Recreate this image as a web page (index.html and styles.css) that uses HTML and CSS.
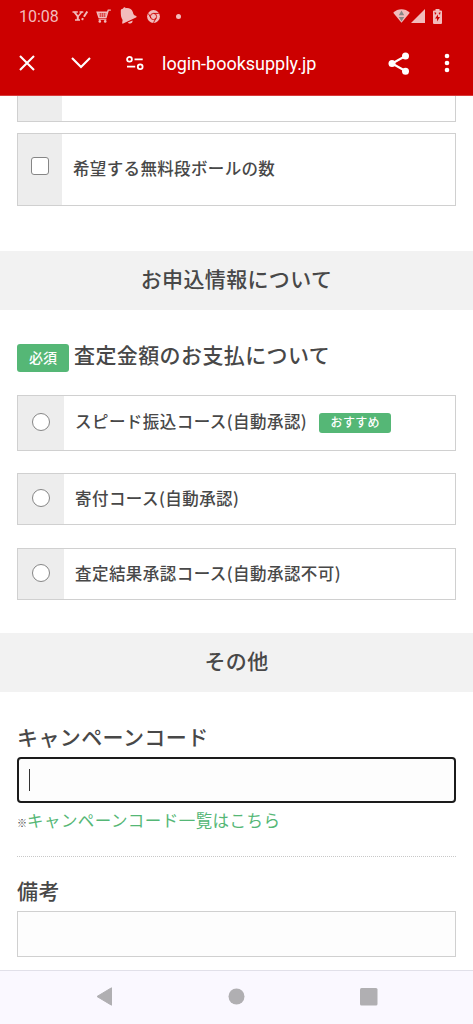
FILE: index.html
```html
<!DOCTYPE html>
<html lang="ja">
<head>
<meta charset="utf-8">
<title>お申込情報</title>
<link rel="stylesheet" href="styles.css">
</head>
<body>
<div class="screen">
  <header class="top">
    <div class="status">
      <span class="clock">10:08</span>
      <svg class="st-yahoo" width="18" height="14" viewBox="0 0 18 14" fill="none" stroke="currentColor"><path d="M.5 3h5.300M7.500 3h3.800M3 11h5" stroke-width="1.300"/><path d="M2.300 3l3.500 4.500V11" stroke-width="2"/><path d="M9.800 3L6 7.500" stroke-width="1.300"/><path d="M15.300 2.500l-3.400 5.300" stroke-width="2"/><path d="M10.900 9.200l-.8 1.800" stroke-width="2"/></svg>
      <svg class="st-cart" width="15" height="14" viewBox="0 0 15 14"><path fill="currentColor" d="M.2 2.600h10.800l.8-2.200h3v1.300h-2L10.600 9H2.400z"/><path fill="none" stroke="currentColor" stroke-width="1.200" d="M2.600 10.200h7.800"/><circle cx="3.800" cy="12.400" r="1.300" fill="currentColor"/><circle cx="9.200" cy="12.400" r="1.300" fill="currentColor"/><path class="cut thin" d="M2.500 4.900h8M3 7h7M4.600 4v4M6.500 4v4M8.400 4v4"/></svg>
      <svg class="st-bell" width="17" height="18" viewBox="0 0 17 18" fill="currentColor"><path d="M.8 4.200C.6 2.400 1.800 1.600 3 1.800 3.400-.2 5.200-.2 5.800 1.200c3.200-.5 6.200 1.300 7 3.800.5 1.700.6 2.400 1.600 3.200l1.800.9c.6.4.4 1.200-.2 1.500L3.200 16.600c-.7.200-1.200-.2-1-.9l.4-2.800C.9 10.500.8 8 .8 4.200z"/><path d="M7.800 15.400l4.800-1.900c.2 3-3 4.100-4.800 1.900z"/></svg>
      <svg class="st-chrome" width="13" height="13" viewBox="0 0 13 13"><circle cx="6.500" cy="6.500" r="6.400" fill="currentColor"/><circle class="cut" cx="6.500" cy="6.500" r="3.100"/><path class="cut" d="M6.500 3.400h5.300M3.900 8L1.300 3.500M9.100 8l-2.600 4.700"/></svg>
      <span class="dot"></span>
      <svg class="st-wifi" width="17" height="14" viewBox="0 0 17 14"><path fill="currentColor" d="M8.500 13.800L.2 3.800C5-.8 12-.8 16.800 3.800z"/><path fill="#888" d="M8.500 1.600l2.700 4.600H5.800zM5.800 8h5.400l-2.700 4.600z"/></svg>
      <svg class="st-signal" width="14" height="14" viewBox="0 0 14 14"><path fill="currentColor" d="M14 0v14H0z"/></svg>
      <svg class="st-battery" width="9" height="15" viewBox="0 0 9 15"><path fill="currentColor" d="M2.500 0h4v1.500H8q1 0 1 1V14q0 1-1 1H1q-1 0-1-1V2.500q0-1 1-1h1.500z"/><path fill="#c00" d="M5 5.500v2.500h2L4 12.500V9.500H2zM1.500 3l2 1-1.500 2zM7.500 3l-2 1L7 6z"/></svg>
    </div>
    <div class="toolbar">
      <svg class="tb-close" width="16" height="16" viewBox="0 0 16 16"><path d="M1 1l14 14M15 1L1 15"/></svg>
      <svg class="tb-down" width="20" height="12" viewBox="0 0 20 12"><path d="M1 1l9 9 9-9"/></svg>
      <svg class="tb-site" width="18" height="14" viewBox="0 0 18 14"><circle cx="3.500" cy="3.300" r="2.400"/><path d="M8.500 3.300h8.200M1 10.700h8.200"/><circle cx="14.200" cy="10.700" r="2.400"/></svg>
      <span class="url">login-booksupply.jp</span>
      <svg class="tb-share" width="22" height="23" viewBox="0 0 22 23"><path d="M17.500 4L4 11.500l13.500 7.500"/><g class="solid"><circle cx="17.500" cy="4" r="3.500"/><circle cx="4" cy="11.500" r="3.500"/><circle cx="17.500" cy="19.200" r="3.500"/></g></svg>
      <svg class="tb-more" width="6" height="20" viewBox="0 0 6 20"><g class="solid"><circle cx="3" cy="3" r="2.300"/><circle cx="3" cy="10" r="2.300"/><circle cx="3" cy="17" r="2.300"/></g></svg>
    </div>
  </header>

  <main class="content">
    <div class="choice choice-cut"><span class="cell"></span></div>
    <label class="choice choice-box"><span class="cell"><span class="check"></span></span><span class="label">希望する無料段ボールの数</span></label>

    <h2 class="section">お申込情報について</h2>

    <div class="question"><span class="required">必須</span><h3 class="title">査定金額のお支払について</h3></div>
    <label class="choice course course-first"><span class="cell"><span class="radio"></span></span><span class="label">スピード振込コース(自動承認)</span><span class="tag">おすすめ</span></label>
    <label class="choice course"><span class="cell"><span class="radio"></span></span><span class="label">寄付コース(自動承認)</span></label>
    <label class="choice course course-last"><span class="cell"><span class="radio"></span></span><span class="label">査定結果承認コース(自動承認不可)</span></label>

    <h2 class="section section-other">その他</h2>

    <h3 class="title title-field">キャンペーンコード</h3>
    <div class="field focused"><span class="caret"></span></div>
    <p class="note"><span class="mark">※</span><a class="link">キャンペーンコード一覧はこちら</a></p>
    <div class="rule"></div>
    <h3 class="title title-remarks">備考</h3>
    <div class="field"></div>
  </main>

  <nav class="navbar">
    <svg width="17" height="19" viewBox="0 0 17 19"><path d="M15.500.8v17.400L1 9.500z" stroke="#b0afb2" stroke-linejoin="round"/></svg>
    <svg width="17" height="17" viewBox="0 0 17 17"><circle cx="8.500" cy="8.500" r="8"/></svg>
    <svg width="18" height="18" viewBox="0 0 18 18"><rect width="17.500" height="17.500" rx="1.500"/></svg>
  </nav>
</div>
</body>
</html>
```
FILE: styles.css
```css
* { box-sizing: border-box; }
body {
  margin: 0;
  background: #fff;
  color: #484848;
  font-family: "Noto Sans CJK JP", sans-serif;
}
svg { display: block; flex: none; }
h2, h3, p { margin: 0; font-weight: 500; }
.screen { width: 473px; height: 1024px; display: flex; flex-direction: column; overflow: hidden; }

.top { flex: none; height: 96px; background: #c00; font-family: Roboto, sans-serif; border-bottom: 1px solid #d83a3a; }
.status { height: 32px; display: flex; align-items: center; color: #f2bcbc; }
.clock { width: 53px; margin-left: 19px; padding-top: 1px; font-size: 16px; letter-spacing: 0; line-height: 32px; }
.st-yahoo { margin-right: -1px; }
.st-cart { margin-left: 7px; }
.st-bell { margin-left: 9px; }
.st-chrome { margin-left: 10px; }
.dot { width: 5px; height: 5px; margin-left: 16px; border-radius: 50%; background: currentColor; }
.st-wifi { margin-left: auto; }
.st-signal { margin-left: 1px; }
.st-battery { margin: 0 31px 0 8px; }
.cut { fill: none; stroke: #c00; stroke-width: 0.9; }
.thin { stroke-width: 0.5; }

.toolbar { height: 62px; display: flex; align-items: center; color: #fff; }
.toolbar svg { fill: none; stroke: #fff; stroke-width: 2.1; }
.toolbar .solid { fill: #fff; stroke: none; }
.tb-close { margin-left: 19px; }
.tb-down { margin-left: 36px; }
.toolbar .tb-site { margin-left: 35px; stroke-width: 1.8; }
.url { margin-left: 18px; padding-top: 1px; font-size: 18px; line-height: 24px; }
.tb-share { margin-left: auto; }
.tb-more { margin: 0 23px 0 34px; }

.content { flex: none; height: 874px; }
.choice { display: flex; margin: 0 17px; border: 1px solid #d0d0d0; background: #fff; }
.choice-cut { height: 26px; border-top: 0; }
.choice-box { height: 73px; margin-top: 11px; }
.cell { flex: none; display: flex; justify-content: center; align-items: center; width: 44px; background: #ededed; }
.check { width: 18px; height: 18px; margin: 0 1px 8px 0; border: 1px solid #868686; border-radius: 3px; background: #fff; }
.label { padding-left: 11px; align-self: center; margin-bottom: 2px; font-size: 16.5px; font-weight: 500; line-height: 24px; letter-spacing: 0.45px; white-space: nowrap; }
.choice-box .label { margin-bottom: 3px; letter-spacing: 0.35px; }

.section { height: 59px; margin-top: 45px; background: #f2f2f2; font-size: 21px; line-height: 55px; letter-spacing: 0.35px; text-align: center; }
.question { display: flex; margin: 29px 17px 0; height: 34px; }
.required { flex: none; width: 52px; height: 28px; margin: 5px 5px 0 0; border-radius: 3px; background: #55b776; color: #fff; font-size: 14px; font-weight: 500; line-height: 26px; letter-spacing: 0; text-align: center; }
.title { font-size: 21px; line-height: 30px; letter-spacing: 0.4px; white-space: nowrap; }

.course { height: 52px; margin-top: 22px; }
.course .cell { width: 46px; padding-bottom: 3px; }
.course-first { height: 56px; }
.course-first .label { margin-bottom: 5px; }
.course-last { margin-top: 23px; }
.radio { width: 18px; height: 18px; border: 1px solid #868686; border-radius: 50%; background: #fff; }
.tag { width: 72px; height: 20px; margin: 17px 0 0 12px; border-radius: 3px; background: #55b776; color: #fff; font-size: 12px; font-weight: 500; line-height: 18px; letter-spacing: 0.3px; text-align: center; }

.section-other { margin-top: 33px; }
.title-field { margin: 29px 17px 0; height: 36px; }
.field { height: 46px; margin: 0 17px; border: 1px solid #d0d0d0; background: #fdfdfd; }
.focused { display: flex; align-items: center; padding-left: 10px; border: 2px solid #1b1b1b; border-radius: 4px; }
.caret { width: 1px; height: 22px; background: #333; }
.note { height: 53px; margin: 0 17px; padding-top: 5px; font-size: 16.5px; line-height: 24px; letter-spacing: 0.45px; white-space: nowrap; }
.mark { font-size: 10px; letter-spacing: 0; font-weight: 700; }
.link { color: #55b776; font-weight: 400; }
.rule { height: 1px; margin: 0 17px; border-top: 1px dotted #c8c8c8; }
.title-remarks { margin: 18px 17px 0; height: 36px; }

.navbar { flex: none; height: 54px; display: flex; align-items: center; gap: 115px; padding: 0 0 2px 96px; border-top: 1px solid #e1e0e9; background: #faf8ff; }
.navbar svg { fill: #b0afb2; }
```
